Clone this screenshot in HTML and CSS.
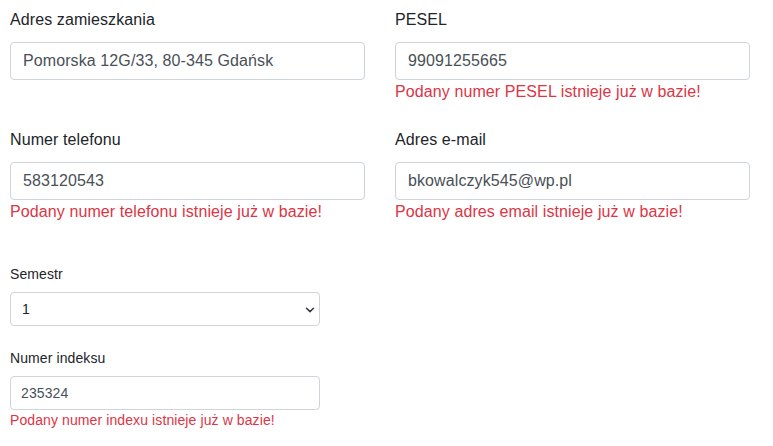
FILE: index.html
```html
<!DOCTYPE html>
<html lang="pl">
<head>
<meta charset="utf-8">
<title>Formularz</title>
<link rel="stylesheet" href="styles.css">
</head>
<body>
<div class="page">
  <div class="grid">
    <div class="group">
      <label class="label">Adres zamieszkania</label>
      <input class="control" type="text" value="Pomorska 12G/33, 80-345 Gdańsk">
    </div>
    <div class="group">
      <label class="label">PESEL</label>
      <input class="control" type="text" value="99091255665">
      <div class="error">Podany numer PESEL istnieje już w bazie!</div>
    </div>
    <div class="group">
      <label class="label">Numer telefonu</label>
      <input class="control" type="text" value="583120543">
      <div class="error">Podany numer telefonu istnieje już w bazie!</div>
    </div>
    <div class="group">
      <label class="label">Adres e-mail</label>
      <input class="control" type="text" value="bkowalczyk545@wp.pl">
      <div class="error">Podany adres email istnieje już w bazie!</div>
    </div>
  </div>
  <div class="small">
    <div class="sgroup">
      <label class="slabel">Semestr</label>
      <div class="select-wrap">
        <select class="scontrol select">
          <option>1</option>
        </select>
        <svg class="chev" width="10" height="6" viewBox="0 0 10 6"><polyline points="1.5,1.2 5,4.6 8.5,1.2" fill="none" stroke="#343a40" stroke-width="1.5" stroke-linecap="round" stroke-linejoin="round"/></svg>
      </div>
    </div>
    <div class="sgroup">
      <label class="slabel">Numer indeksu</label>
      <input class="scontrol" type="text" value="235324">
      <div class="serror">Podany numer indexu istnieje już w bazie!</div>
    </div>
  </div>
</div>
</body>
</html>
```

FILE: styles.css
```css
* { box-sizing: border-box; }
body {
  margin: 0;
  background: #fff;
  font-family: "Liberation Sans", Arial, sans-serif;
  color: #212529;
  letter-spacing: 0.1px;
}
.page {
  padding: 8px 0 0 10px;
}
.grid {
  display: grid;
  grid-template-columns: 355px 355px;
  column-gap: 30px;
  row-gap: 24px;
  align-items: start;
}
.group {
  display: flex;
  flex-direction: column;
}
.label {
  font-size: 16px;
  line-height: 24px;
  margin-bottom: 10px;
}
.control {
  height: 38px;
  width: 100%;
  padding: 0 12px;
  border: 1px solid #ced4da;
  border-radius: 4px;
  font-family: inherit;
  font-size: 16px;
  letter-spacing: 0.1px;
  color: #495057;
  background: #fff;
  outline: none;
}
.error {
  font-size: 16px;
  line-height: 24px;
  color: #dc3545;
}
.small {
  margin-top: 40px;
  width: 310px;
  display: flex;
  flex-direction: column;
  gap: 22px;
}
.sgroup {
  display: flex;
  flex-direction: column;
}
.slabel {
  font-size: 14px;
  line-height: 21px;
  margin-bottom: 7px;
}
.scontrol {
  height: 34px;
  width: 100%;
  padding: 0 10px;
  border: 1px solid #ced4da;
  border-radius: 4px;
  font-family: inherit;
  font-size: 14px;
  letter-spacing: 0.1px;
  color: #495057;
  background: #fff;
  outline: none;
}
.select-wrap {
  position: relative;
}
.select {
  appearance: none;
  -webkit-appearance: none;
  padding-left: 11px;
  color: #212529;
}
.chev {
  position: absolute;
  right: 5px;
  top: 15px;
  pointer-events: none;
}
.serror {
  font-size: 14px;
  line-height: 21px;
  color: #dc3545;
}
```
